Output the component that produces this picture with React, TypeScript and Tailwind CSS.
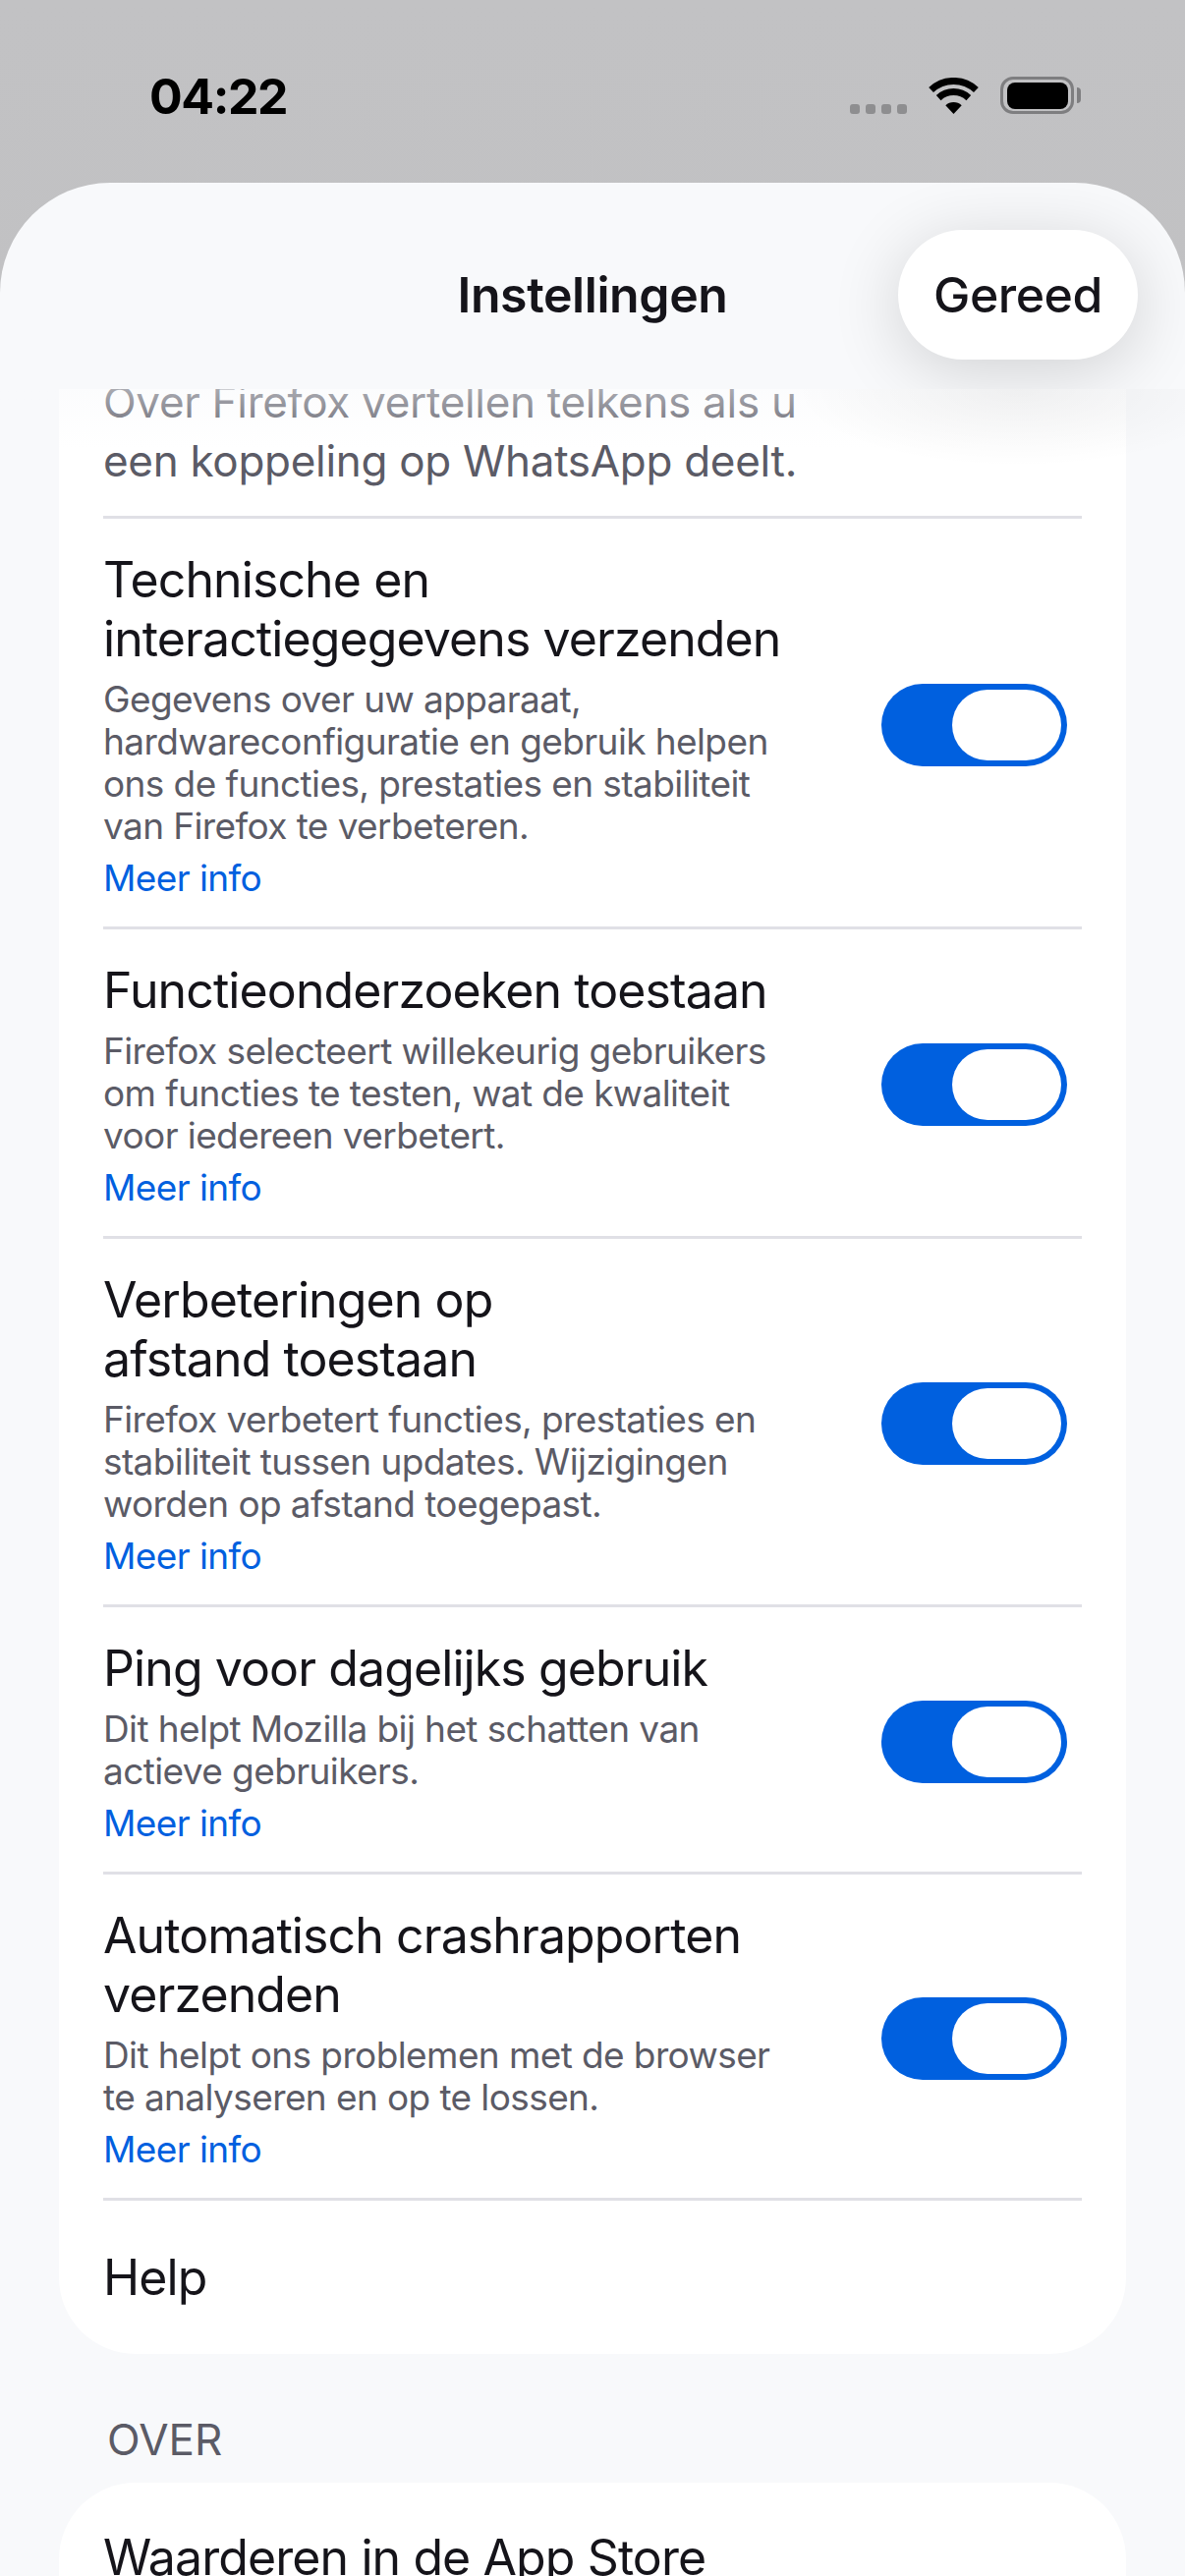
const rows = [
  {
    title: ["Technische en", "interactiegegevens verzenden"],
    desc: [
      "Gegevens over uw apparaat,",
      "hardwareconfiguratie en gebruik helpen",
      "ons de functies, prestaties en stabiliteit",
      "van Firefox te verbeteren.",
    ],
  },
  {
    title: ["Functieonderzoeken toestaan"],
    desc: [
      "Firefox selecteert willekeurig gebruikers",
      "om functies te testen, wat de kwaliteit",
      "voor iedereen verbetert.",
    ],
  },
  {
    title: ["Verbeteringen op", "afstand toestaan"],
    desc: [
      "Firefox verbetert functies, prestaties en",
      "stabiliteit tussen updates. Wijzigingen",
      "worden op afstand toegepast.",
    ],
  },
  {
    title: ["Ping voor dagelijks gebruik"],
    desc: ["Dit helpt Mozilla bij het schatten van", "actieve gebruikers."],
  },
  {
    title: ["Automatisch crashrapporten", "verzenden"],
    desc: ["Dit helpt ons problemen met de browser", "te analyseren en op te lossen."],
  },
];

function Lines({ lines }: { lines: string[] }) {
  return (
    <>
      {lines.map((line) => (
        <div key={line} className="whitespace-nowrap">
          {line}
        </div>
      ))}
    </>
  );
}

function Toggle() {
  return (
    <div className="flex h-[84px] w-[189px] shrink-0 items-center justify-end rounded-full bg-[#0060df] pr-[6px]">
      <div className="h-[72px] w-[111px] rounded-full bg-white" />
    </div>
  );
}

function StatusIcons() {
  return (
    <div className="flex items-center">
      <div className="mt-[28px] flex gap-[6px]">
        <span className="h-[10px] w-[10px] rounded-[3px] bg-[#8e8e90]" />
        <span className="h-[10px] w-[10px] rounded-[3px] bg-[#8e8e90]" />
        <span className="h-[10px] w-[10px] rounded-[3px] bg-[#8e8e90]" />
        <span className="h-[10px] w-[10px] rounded-[3px] bg-[#8e8e90]" />
      </div>
      <svg className="ml-[22px]" width="51" height="37" viewBox="0 0 51 37" fill="none">
        <path d="M2.6 12.5A33.5 33.5 0 0 1 48.4 12.5" stroke="#000" strokeWidth="7" />
        <path d="M10.2 20.6A22.5 22.5 0 0 1 40.8 20.6" stroke="#000" strokeWidth="7" />
        <path d="M25.5 37L17.3 28.2A12 12 0 0 1 33.7 28.2Z" fill="#000" />
      </svg>
      <div className="ml-[22px] flex items-center">
        <div className="flex h-[38px] w-[75px] items-center justify-center rounded-[13px] border-[3px] border-[#7e7e80]">
          <div className="h-[27px] w-[62px] rounded-[8px] bg-black" />
        </div>
        <div className="ml-[3px] h-[16px] w-[4px] rounded-r-full bg-[#7e7e80]" />
      </div>
    </div>
  );
}

export default function App() {
  return (
    <div
      className="flex h-[2622px] w-[1206px] flex-col overflow-hidden bg-gradient-to-b from-[#c2c2c4] to-[#bbbbbb]"
      style={{ fontFamily: "Inter, 'Liberation Sans', sans-serif" }}
    >
      <div className="flex h-[186px] shrink-0 items-start justify-between pl-[152px] pr-[106px] pt-[68px]">
        <span className="text-[50px] font-bold leading-[60px] tracking-[-1.4px] text-black">04:22</span>
        <div className="mt-[10px]">
          <StatusIcons />
        </div>
      </div>

      <div className="flex min-h-0 flex-1 flex-col overflow-hidden rounded-t-[112px] bg-[#f8f9fb]">
        <header className="relative z-10 flex h-[210px] shrink-0 items-start justify-center overflow-hidden pt-[84px]">
          <h1 className="text-[50px] font-semibold leading-[60px] tracking-[-0.4px] text-[#15141a]">Instellingen</h1>
          <button
            type="button"
            className="absolute right-[48px] top-[48px] h-[132px] w-[244px] rounded-full bg-white text-[50px] font-medium leading-[60px] tracking-[-0.5px] text-[#15141a] shadow-[0_12px_70px_rgba(0,0,0,0.16)]"
          >
            Gereed
          </button>
        </header>

        <main className="relative min-h-0 flex-1 overflow-hidden px-[60px]">
          <div className="pointer-events-none absolute inset-x-0 top-0 h-[60px] bg-gradient-to-b from-[#f8f9fb]/50 to-transparent" />
          <div className="pointer-events-none absolute right-[-60px] top-0 h-[80px] w-[460px] bg-[radial-gradient(ellipse_at_top,rgba(0,0,0,0.05),transparent_70%)]" />
          <section className="rounded-b-[78px] bg-white px-[45px]">
            <p className="-mt-[17px] border-b-[3px] border-[#e0e0e6] pb-[26px] text-[44px] leading-[60px] tracking-[-0.3px] text-[#5b5b66]">
              <Lines lines={["Over Firefox vertellen telkens als u", "een koppeling op WhatsApp deelt."]} />
            </p>
            {rows.map((row) => (
              <div
                key={row.title[0]}
                className="flex items-center justify-between border-b-[3px] border-[#e0e0e6] pb-[28px] pr-[15px] pt-[32px]"
              >
                <div>
                  <div className="text-[50px] leading-[60px] tracking-[-0.9px] text-[#15141a]">
                    <Lines lines={row.title} />
                  </div>
                  <div className="mt-[10px] text-[37px] leading-[43px] tracking-[-0.6px] text-[#5b5b66]">
                    <Lines lines={row.desc} />
                  </div>
                  <div className="mt-[10px] text-[37px] leading-[43px] tracking-[-0.6px] text-[#0060df]">Meer info</div>
                </div>
                <Toggle />
              </div>
            ))}
            <div className="flex h-[156px] items-center text-[50px] leading-[60px] tracking-[-0.9px] text-[#15141a]">
              Help
            </div>
          </section>

          <h2 className="ml-[49px] mt-[62px] text-[44px] leading-[50px] text-[#5b5b66]">OVER</h2>
          <section className="mt-[19px] rounded-t-[78px] bg-white px-[45px] pt-[46px]">
            <div className="whitespace-nowrap text-[50px] leading-[60px] tracking-[-0.9px] text-[#15141a]">
              Waarderen in de App Store
            </div>
          </section>
        </main>
      </div>
    </div>
  );
}
